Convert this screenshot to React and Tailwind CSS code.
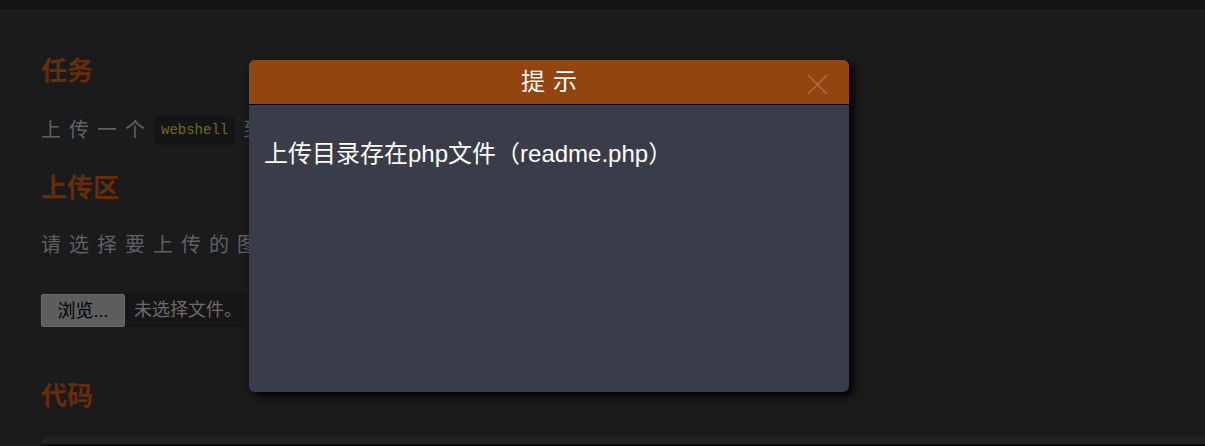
export default function App() {
  const font = "font-['Liberation_Sans','Noto_Sans_CJK_SC',sans-serif]";
  return (
    <div className={`relative h-[446px] w-[1205px] overflow-hidden bg-[#1b1b1b] ${font}`}>
      <div className="h-[9px] bg-[#141414]" />
      <div className="pl-[41px] pt-[44px]">
        <h2 className="text-[26px] font-bold leading-[36px] text-[#652c0a]">任务</h2>
        <p className="mt-[26px] flex items-center text-[20px] leading-[30px] tracking-[8px] text-[#5c6166]">
          <span>上传一个</span>
          <code className="ml-[1px] mr-[8px] rounded-[6px] bg-[#151515] px-[7px] font-['Liberation_Mono',monospace] text-[14px] leading-[30px] tracking-normal text-[#6e6a2c]">
            webshell
          </code>
          <span>到服务器。</span>
        </p>
        <h2 className="mt-[25px] text-[26px] font-bold leading-[36px] text-[#652c0a]">上传区</h2>
        <p className="mt-[24px] text-[20px] leading-[30px] tracking-[8px] text-[#5c6166]">请选择要上传的图片：</p>
        <div className="mt-[34px] flex h-[33px] w-fit items-stretch bg-[#161616]">
          <span className="flex w-[84px] items-center justify-center rounded-[2px] border border-[#6a6a6a] bg-[#5d5d5d] text-[18px] leading-none text-black">
            浏览...
          </span>
          <span className="flex items-center pl-[9px] pr-[4px] text-[18px] text-[#6b6b6b]">未选择文件。</span>
        </div>
        <h2 className="mt-[51px] text-[26px] font-bold leading-[36px] text-[#652c0a]">代码</h2>
        <div className="mt-[23px] h-[40px] rounded-tl-[8px] bg-[#222222] pt-[7px]">
          <div className="h-full bg-[#101010]" />
        </div>
      </div>

      <div className="absolute left-[249px] top-[60px] flex h-[332px] w-[600px] flex-col overflow-hidden rounded-[6px] bg-[#393d49] shadow-[4px_4px_10px_rgba(0,0,0,1)]">
        <div className="relative flex h-[45px] shrink-0 items-center justify-center border-b border-black bg-[#93450f] pl-[8px] text-[24px] leading-[44px] tracking-[8px] text-white">
          提示
          <svg className="absolute right-[21px] top-[14px]" width="21" height="21" viewBox="0 0 21 21">
            <path d="M1 1 L20 20 M20 1 L1 20" stroke="rgba(255,255,255,0.22)" strokeWidth="1.5" fill="none" />
          </svg>
        </div>
        <div className="px-[15px] pt-[32px] text-[24px] leading-[34px] text-white">
          上传目录存在php文件（readme.php）
        </div>
      </div>
    </div>
  );
}
